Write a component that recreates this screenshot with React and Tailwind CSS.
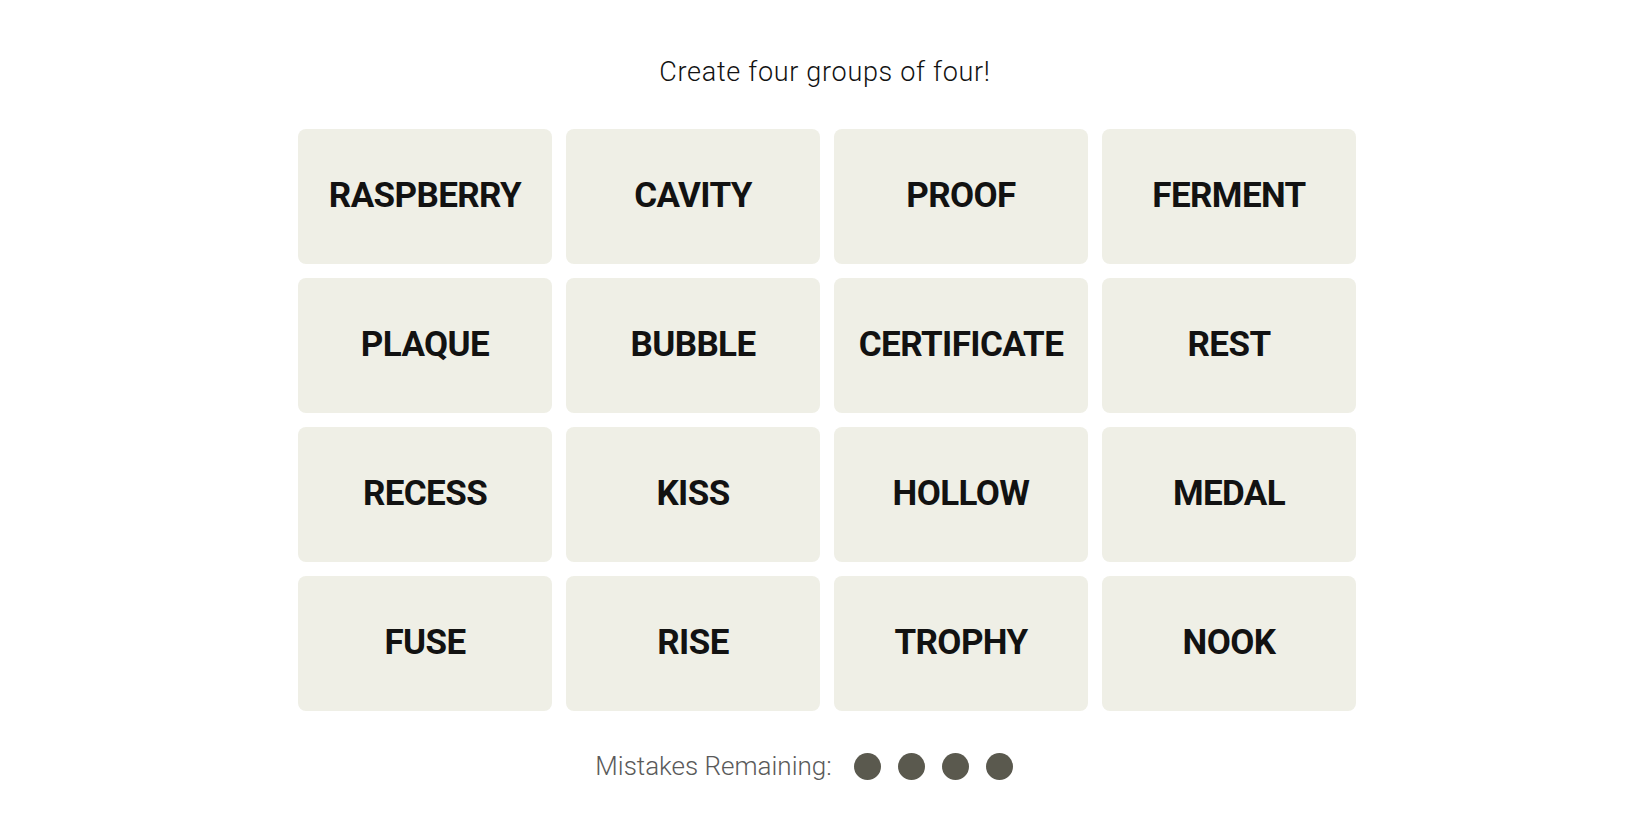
import React from 'react';

const words = [
  'RASPBERRY', 'CAVITY', 'PROOF', 'FERMENT',
  'PLAQUE', 'BUBBLE', 'CERTIFICATE', 'REST',
  'RECESS', 'KISS', 'HOLLOW', 'MEDAL',
  'FUSE', 'RISE', 'TROPHY', 'NOOK',
];

const App = () => {
  return (
    <div className="min-h-screen bg-white flex flex-col items-center font-['Roboto',sans-serif] text-black">
      <p className="mt-[56px] h-[32px] leading-[32px] text-[27px] font-light tracking-[0.7px] text-[#121212]">
        Create four groups of four!
      </p>

      {/* Board */}
      <div className="mt-[41px] ml-[4px] grid grid-cols-4 gap-x-[14px] gap-y-[14px] w-[1058px]">
        {words.map((w) => (
          <button
            key={w}
            className="h-[135px] rounded-[8px] bg-[#efefe6] flex items-center justify-center text-[35px] font-bold tracking-[-0.6px] text-[#121212]"
          >
            {w}
          </button>
        ))}
      </div>

      <div className="mt-[39px] mr-[42px] flex items-center">
        <span className="text-[26px] font-light text-[#5a5a5a] leading-[32px]">Mistakes Remaining:</span>
        <div className="ml-[22px] flex gap-[17px]">
          {[0, 1, 2, 3].map((i) => (
            <span key={i} className="w-[27px] h-[27px] rounded-full bg-[#5a594e]" />
          ))}
        </div>
      </div>
    </div>
  );
};

export default App;
